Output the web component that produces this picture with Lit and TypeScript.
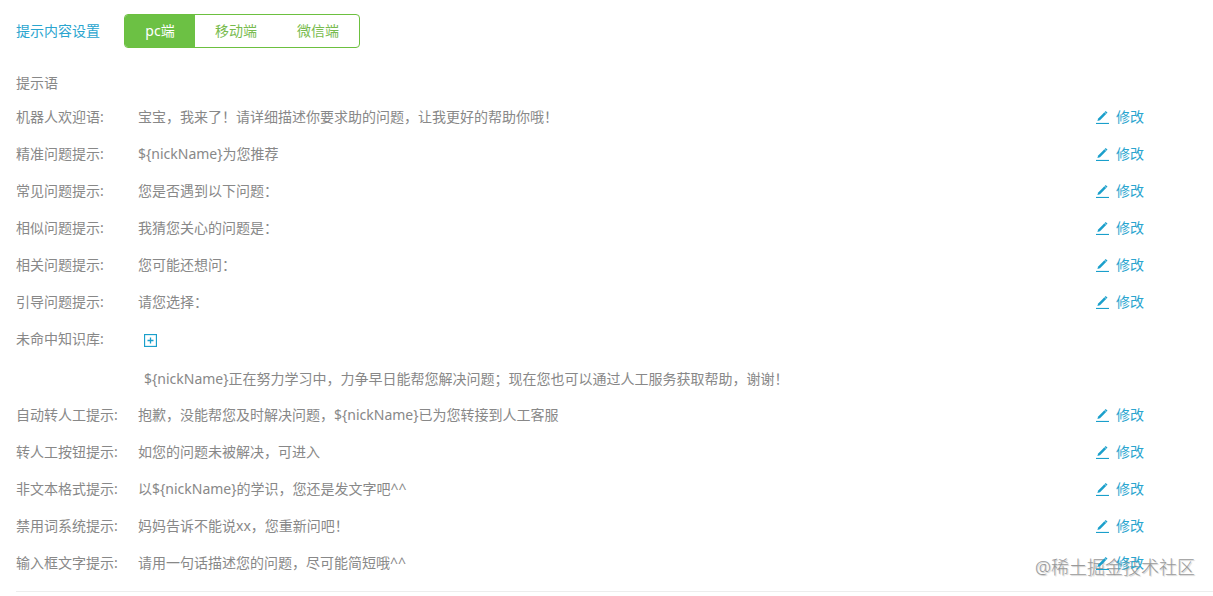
import { LitElement, html, css, svg, nothing } from "lit";
import { customElement, state } from "lit/decorators.js";
import { classMap } from "lit/directives/class-map.js";

interface Prompt {
  label: string;
  text: string;
  list?: boolean;
}

const TABS = ["pc端", "移动端", "微信端"];

const PROMPTS: Prompt[] = [
  { label: "机器人欢迎语:", text: "宝宝，我来了！请详细描述你要求助的问题，让我更好的帮助你哦！" },
  { label: "精准问题提示:", text: "${nickName}为您推荐" },
  { label: "常见问题提示:", text: "您是否遇到以下问题：" },
  { label: "相似问题提示:", text: "我猜您关心的问题是：" },
  { label: "相关问题提示:", text: "您可能还想问：" },
  { label: "引导问题提示:", text: "请您选择：" },
  {
    label: "未命中知识库:",
    text: "${nickName}正在努力学习中，力争早日能帮您解决问题；现在您也可以通过人工服务获取帮助，谢谢！",
    list: true,
  },
  { label: "自动转人工提示:", text: "抱歉，没能帮您及时解决问题，${nickName}已为您转接到人工客服" },
  { label: "转人工按钮提示:", text: "如您的问题未被解决，可进入" },
  { label: "非文本格式提示:", text: "以${nickName}的学识，您还是发文字吧^^" },
  { label: "禁用词系统提示:", text: "妈妈告诉不能说xx，您重新问吧！" },
  { label: "输入框文字提示:", text: "请用一句话描述您的问题，尽可能简短哦^^" },
];

const pencil = svg`
  <path d="M0 14.5H13" stroke="currentColor" stroke-width="1.2" fill="none" />
  <path d="M1.4 12L2.2 9.4L8.4 3.2L10.2 5L4 11.2Z" fill="currentColor" />
  <path d="M8.7 2.9L9.7 1.9L11.5 3.7L10.5 4.7Z" fill="currentColor" />`;

@customElement("app-root")
export class AppRoot extends LitElement {
  static styles = css`
    :host {
      display: block;
      position: relative;
      z-index: 0;
      box-sizing: border-box;
      padding: 14px 0 4px 16px;
      color: #888;
      font-family: "Noto Sans", "Noto Sans CJK SC", sans-serif;
      font-size: 14px;
      line-height: 20px;
    }
    button {
      margin: 0;
      border: 0;
      padding: 0;
      background: none;
      color: inherit;
      font: inherit;
      cursor: pointer;
    }
    .header {
      display: flex;
      align-items: center;
      gap: 24px;
    }
    .title {
      margin: 0;
      color: #2aa5cf;
      font-size: 14px;
      font-weight: 400;
    }
    .tabs {
      display: flex;
      border: 1px solid #6cc03f;
      border-radius: 4px;
      overflow: hidden;
    }
    .tab {
      min-width: 70px;
      padding: 6px 20px;
      color: #78bb4e;
    }
    .tab.active {
      background: #6cc144;
      color: #fff;
    }
    .caption {
      margin: 20px 0 0;
      font-size: 14px;
      font-weight: 400;
      line-height: 30px;
    }
    .prompts {
      margin: 0;
      padding-bottom: 10px;
      border-bottom: 1px solid #ededed;
    }
    .row {
      display: grid;
      grid-template-columns: 122px 1fr auto;
      padding-right: 69px;
      line-height: 37px;
    }
    dt,
    dd {
      margin: 0;
    }
    .edit {
      display: flex;
      align-items: center;
      gap: 7px;
      color: #2aa5cf;
      text-decoration: none;
    }
    .add {
      display: flex;
      align-items: center;
      height: 37px;
      padding: 3px 6px 0;
      color: #1a9fcb;
    }
    .item {
      padding: 5px 6px 0;
      line-height: 34px;
    }
    svg {
      display: block;
    }
    .edit svg {
      color: #1a9fcb;
    }
    .watermark {
      position: absolute;
      z-index: -1;
      right: 18px;
      bottom: 15px;
      color: #999;
      font-size: 18px;
      font-weight: 300;
      line-height: 28px;
      text-shadow: 1px 1px 1px #ccc;
      pointer-events: none;
    }
  `;

  @state() private active = 0;

  private renderRow(p: Prompt) {
    return html`
      <div class="row">
        <dt>${p.label}</dt>
        <dd>
          ${p.list
            ? html`
                <button class="add" type="button" aria-label="+">
                  <svg width="13" height="13" viewBox="0 0 13 13" fill="none" stroke="currentColor">
                    <rect x="0.5" y="0.5" width="12" height="12" stroke-width="1.3" />
                    <path d="M3.5 6.5H9.5M6.5 3.5V9.5" stroke-width="1.3" />
                  </svg>
                </button>
                <div class="item">${p.text}</div>
              `
            : p.text}
        </dd>
        ${p.list
          ? nothing
          : html`<dd>
              <a class="edit" href="#">
                <svg width="13" height="15" viewBox="0 0 13 15">${pencil}</svg>修改</a
              >
            </dd>`}
      </div>
    `;
  }

  render() {
    return html`
      <div class="header">
        <h1 class="title">提示内容设置</h1>
        <div class="tabs" role="tablist">
          ${TABS.map(
            (tab, i) => html`<button
              type="button"
              role="tab"
              aria-selected=${i === this.active ? "true" : "false"}
              class=${classMap({ tab: true, active: i === this.active })}
              @click=${() => (this.active = i)}
            >${tab}</button>`
          )}
        </div>
      </div>
      <h2 class="caption">提示语</h2>
      <dl class="prompts">${PROMPTS.map((p) => this.renderRow(p))}</dl>
      <div class="watermark">@稀土掘金技术社区</div>
    `;
  }
}
